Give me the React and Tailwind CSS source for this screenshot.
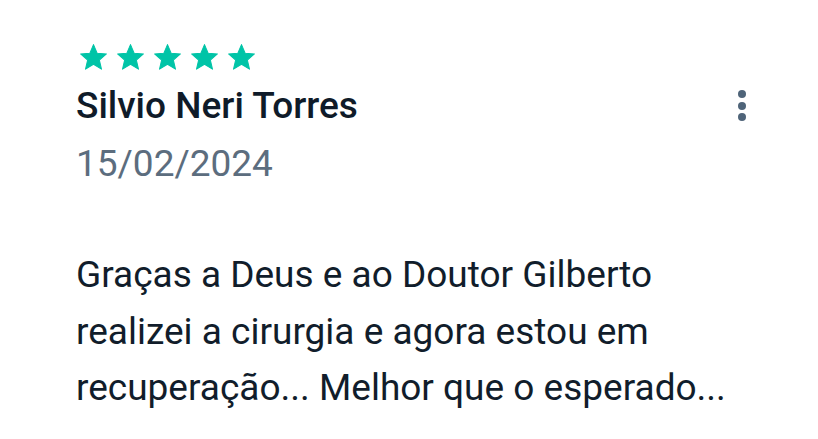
import React from 'react';

const Star = () => (
    <svg viewBox="0 0 24 24" className="w-[31px] h-[31px]" fill="#00c4a7" stroke="#00c4a7" strokeWidth="0.8" strokeLinejoin="round">
        <path d="M12 17.27L18.18 21l-1.64-7.03L22 9.24l-7.19-.61L12 2 9.19 8.63 2 9.24l5.46 4.73L5.82 21z" />
    </svg>
);

export default function App() {
    return (
        <div className="w-[818px] h-[439px] bg-white overflow-hidden font-['Roboto',sans-serif]">
            <div className="pl-[76px] pr-[64px] pt-[42px]">
                <div className="flex gap-[6px] ml-[2px]">
                    {[0, 1, 2, 3, 4].map(i => <Star key={i} />)}
                </div>

                <div className="flex items-start justify-between mt-[9px]">
                    <div className="text-[37px] leading-[48px] font-medium text-[#0f1b29]">Silvio Neri Torres</div>
                    {/* kebab menu */}
                    <div className="flex flex-col items-center gap-[3.5px] pt-[8px] pr-[8px]">
                        <span className="w-[8px] h-[8px] rounded-full bg-[#4f6479]"></span>
                        <span className="w-[8px] h-[8px] rounded-full bg-[#4f6479]"></span>
                        <span className="w-[8px] h-[8px] rounded-full bg-[#4f6479]"></span>
                    </div>
                </div>

                <div className="mt-[10px] text-[37px] leading-[48px] text-[#5c6d7e]">15/02/2024</div>

                <p className="mt-[59px] text-[37px] leading-[56.5px] text-[#111d2b]">
                    Graças a Deus e ao Doutor Gilberto<br />
                    realizei a cirurgia e agora estou em<br />
                    recuperação... Melhor que o esperado...
                </p>
            </div>
        </div>
    );
}
